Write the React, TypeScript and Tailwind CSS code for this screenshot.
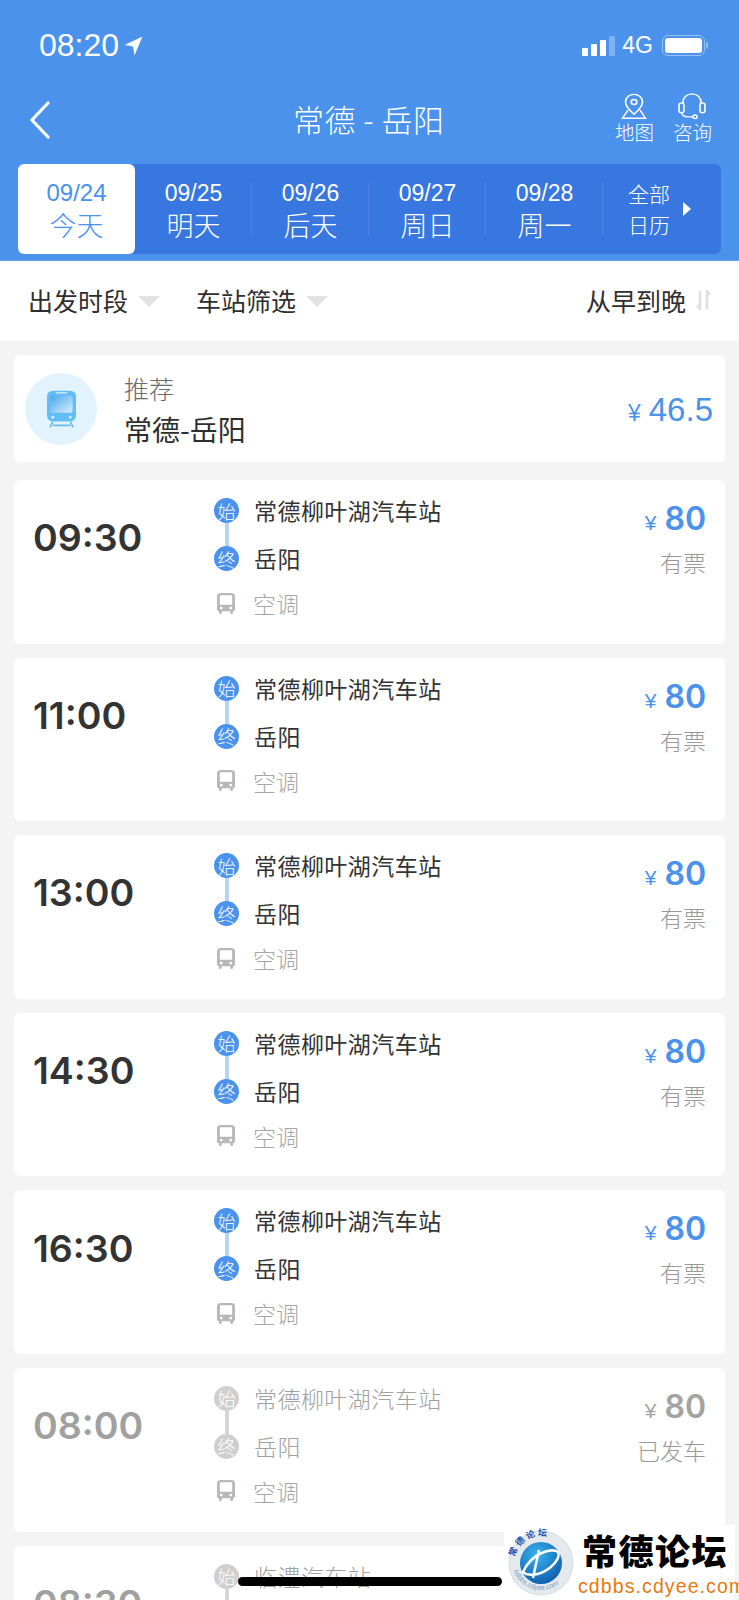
import React from "react";

const cjk = { fontFamily: '"Noto Sans CJK SC", sans-serif' };
const latin = { fontFamily: '"Liberation Sans", sans-serif' };

const tabs = [
  ["09/24", "今天"],
  ["09/25", "明天"],
  ["09/26", "后天"],
  ["09/27", "周日"],
  ["09/28", "周一"],
];

const trips = [
  { time: "09:30", from: "常德柳叶湖汽车站", status: "有票", off: false },
  { time: "11:00", from: "常德柳叶湖汽车站", status: "有票", off: false },
  { time: "13:00", from: "常德柳叶湖汽车站", status: "有票", off: false },
  { time: "14:30", from: "常德柳叶湖汽车站", status: "有票", off: false },
  { time: "16:30", from: "常德柳叶湖汽车站", status: "有票", off: false },
  { time: "08:00", from: "常德柳叶湖汽车站", status: "已发车", off: true },
  { time: "08:30", from: "临澧汽车站", status: "已发车", off: true },
];

function BusIcon() {
  return (
    <svg width="18" height="21" viewBox="0 0 19 23" preserveAspectRatio="none" className="block">
      <path fillRule="evenodd" fill="#b8b8b8" d="M4 0h11a4 4 0 0 1 4 4v14a2 2 0 0 1-2 2v1.500a1.500 1.500 0 0 1-3 0V20H5v1.500a1.500 1.500 0 0 1-3 0V20a2 2 0 0 1-2-2V4a4 4 0 0 1 4-4Zm-1 3.500V13h13V3.500a1 1 0 0 0-1-1H4a1 1 0 0 0-1 1ZM4.500 15a1.500 1.500 0 1 0 0 3 1.500 1.500 0 0 0 0-3Zm10 0a1.500 1.500 0 1 0 0 3 1.500 1.500 0 0 0 0-3Z" />
    </svg>
  );
}

function TrainIcon() {
  return (
    <svg width="29" height="38" viewBox="0 0 30 38" className="block">
      <defs>
        <linearGradient id="tg" x1="0" y1="0" x2="1" y2="1">
          <stop offset="0" stopColor="#4aa8f0" />
          <stop offset="1" stopColor="#d8eefc" />
        </linearGradient>
      </defs>
      <rect x="0" y="0" width="30" height="32" rx="6" fill="#63bdf5" />
      <rect x="3.500" y="5" width="23" height="18" rx="3" fill="url(#tg)" />
      <rect x="9" y="1.500" width="12" height="1.500" rx="0.700" fill="#c6e8fc" />
      <circle cx="6" cy="27.500" r="1.500" fill="#d8eefc" />
      <circle cx="24" cy="27.500" r="1.500" fill="#d8eefc" />
      <path d="M6 32 3 38M24 32l3 6M6 36h18" stroke="#63bdf5" strokeWidth="1.800" fill="none" />
    </svg>
  );
}

function Badge({ label, off }: { label: string; off: boolean }) {
  return (
    <span
      style={cjk}
      className={`flex h-[25px] w-[25px] items-center justify-center rounded-full text-[18px] font-light leading-none text-white ${off ? "bg-[#cfcfcf]" : "bg-[#4a92ec]"}`}
    >
      {label}
    </span>
  );
}

function TripCard({ time, from, status, off }: { time: string; from: string; status: string; off: boolean }) {
  const text = off ? "text-[#a0a0a0]" : "text-[#333333]";
  const accent = off ? "text-[#a3a3a3]" : "text-[#4a92ec]";
  return (
    <div className="mb-[14px] flex h-[163.600px] rounded-[6px] bg-white">
      <div
        style={{ fontFamily: "Inter, sans-serif" }}
        className={`flex w-[199px] items-center pb-[47px] pl-[19px] text-[37.500px] font-semibold ${off ? "text-[#a0a0a0]" : "text-[#333333]"}`}
      >
        {time}
      </div>
      <div className="flex flex-1 flex-col pt-[18px]" style={cjk}>
        <div className="flex">
          <div className="flex w-[41px] flex-col items-start pl-[1px]">
            <Badge label="始" off={off} />
            <span className={`ml-[10.500px] h-[23px] w-[4px] ${off ? "bg-[#d6d6d6]" : "bg-[#b9d3f5]"}`} />
            <Badge label="终" off={off} />
          </div>
          <div className={`flex flex-col gap-[18px] text-[23px] leading-[30px] tracking-[0.450px] ${off ? "font-light" : "font-normal"} ${text}`}>
            <span className="-mt-[3px]">{from}</span>
            <span>岳阳</span>
          </div>
        </div>
        <div className="mt-[15px] flex items-center gap-[18px] pl-[4px] text-[23px] font-light leading-[30px] text-[#a6a6a6]">
          <BusIcon />
          <span>空调</span>
        </div>
      </div>
      <div className="flex flex-col items-end pr-[19px] pt-[19px]">
        <div className={`flex items-baseline gap-[8px] leading-[40px] ${accent}`}>
          <span style={latin} className="text-[21px]">¥</span>
          <span style={{ fontFamily: "Inter, sans-serif" }} className="text-[32px] font-semibold">80</span>
        </div>
        <span style={cjk} className="mt-[4px] text-[23px] font-light leading-[30px] text-[#999999]">{status}</span>
      </div>
    </div>
  );
}

function Triangle() {
  return <span className="h-0 w-0 border-x-[11px] border-t-[11px] border-x-transparent border-t-[#e2e2e2]" />;
}

function Watermark() {
  return (
    <div className="absolute left-[504px] top-[1525px] flex h-[75px] w-[231px] bg-white">
      <svg width="70" height="70" viewBox="0 0 70 70" className="mt-[3px] ml-[2px] shrink-0">
        <defs>
          <radialGradient id="lg" cx="0.400" cy="0.300" r="0.800">
            <stop offset="0" stopColor="#39b4ee" />
            <stop offset="1" stopColor="#0a55a8" />
          </radialGradient>
          <path id="top" d="M8 35a27 27 0 0 1 54 0" />
          <path id="bot" d="M6 33a29 29 0 0 0 58 0" />
        </defs>
        <circle cx="35" cy="35" r="32" fill="#e4e9ee" stroke="#d5dbe2" />
        <circle cx="35" cy="35" r="21" fill="url(#lg)" />
        <path d="M17 44 C26 24 46 20 52 24 C56 32 38 50 20 46Z M33 22 L27 50" fill="none" stroke="#ffffff" strokeWidth="2.500" />
        <text fontSize="9" fontWeight="700" fill="#1c4fb0" style={cjk}>
          <textPath href="#top" startOffset="6">常 德 论 坛</textPath>
        </text>
        <text fontSize="7" fill="#7d9cc0" style={latin}>
          <textPath href="#bot" startOffset="10">cdbbs.cdyee.com</textPath>
        </text>
      </svg>
      <div className="ml-[2px] flex flex-col">
        <span style={cjk} className="ml-[4px] mt-[1px] text-[35px] font-black leading-[48px] tracking-[1.500px] text-black">常德论坛</span>
        <span style={latin} className="mt-[1px] text-[19.500px] leading-[22px] tracking-[1.100px] text-[#e8780f]">cdbbs.cdyee.com</span>
      </div>
    </div>
  );
}

export default function App() {
  return (
    <div className="relative h-[1600px] w-[739px] overflow-hidden bg-[#f4f4f4]">
      <header className="h-[261px] border-b border-[#6aa8f2] bg-[#4a92ec] text-white">
        <div className="flex h-[88px] items-center justify-between pl-[39px] pr-[31px] pt-[2px]">
          <div className="flex items-center gap-[5px]">
            <span style={latin} className="text-[32px] font-medium">08:20</span>
            <svg width="19" height="20" viewBox="0 0 19 20" className="mt-[1px]">
              <path d="M18.500 0.500 0.500 9l8.500 1.500L10.500 19.500Z" fill="#ffffff" />
            </svg>
          </div>
          <div className="flex items-center">
            <div className="mt-[2px] flex items-end gap-[3px]">
              <span className="h-[8px] w-[6px] rounded-[1px] bg-white" />
              <span className="h-[12px] w-[6px] rounded-[1px] bg-white" />
              <span className="h-[16px] w-[6px] rounded-[1px] bg-white" />
              <span className="h-[20px] w-[6px] rounded-[1px] bg-[#7fb2f1]" />
            </div>
            <span style={latin} className="ml-[7px] text-[23px]">4G</span>
            <div className="ml-[9px] flex items-center">
              <div className="flex h-[21px] w-[43px] rounded-[6px] border border-[#97c1f4] p-[2px]">
                <div className="flex-1 rounded-[3px] bg-white" />
              </div>
              <span className="ml-[1px] h-[7px] w-[2px] rounded-r-[2px] bg-[#97c1f4]" />
            </div>
          </div>
        </div>

        <div className="flex h-[76px] items-start pr-[27px]">
          <svg width="26" height="38" viewBox="0 0 26 38" className="ml-[28px] mt-[13px] shrink-0">
            <path d="M20 2 4 19l16 17" fill="none" stroke="#ffffff" strokeWidth="3.200" strokeLinecap="round" />
          </svg>
          <div style={cjk} className="ml-[239px] mt-[12px] flex-1 whitespace-nowrap text-[31px] font-light leading-[38px] tracking-[0.500px]">常德 - 岳阳</div>
          <div style={cjk} className="flex gap-[19px] text-[19.500px] font-light leading-[24px]">
            <div className="flex flex-col items-center">
              <svg width="26" height="27" viewBox="0 0 26 30" preserveAspectRatio="none" className="mt-[5px]">
                <path d="M13 1.500a8.500 8.500 0 0 0-8.500 8.500c0 5.500 8.500 13.500 8.500 13.500S21.500 15.500 21.500 10A8.500 8.500 0 0 0 13 1.500Z" fill="none" stroke="#fff" strokeWidth="1.600" />
                <circle cx="13" cy="10" r="2.800" fill="none" stroke="#fff" strokeWidth="1.600" />
                <path d="M7 19 1.500 28h23L19 19" fill="none" stroke="#fff" strokeWidth="1.600" />
              </svg>
              <span>地图</span>
            </div>
            <div className="flex flex-col items-center">
              <svg width="30" height="27" viewBox="0 0 30 30" preserveAspectRatio="none" className="mt-[5px]">
                <path d="M6 12V10a9 9 0 0 1 18 0v2" fill="none" stroke="#fff" strokeWidth="1.600" />
                <rect x="2" y="11" width="5" height="11" rx="2.500" fill="none" stroke="#fff" strokeWidth="1.600" />
                <rect x="23" y="11" width="5" height="11" rx="2.500" fill="none" stroke="#fff" strokeWidth="1.600" />
                <path d="M5 22c0 3 2 4.500 6 4.500h5" fill="none" stroke="#fff" strokeWidth="1.600" />
                <circle cx="18" cy="26.500" r="2" fill="none" stroke="#fff" strokeWidth="1.600" />
              </svg>
              <span>咨询</span>
            </div>
          </div>
        </div>

        <div className="mx-[18px] flex h-[90px] rounded-[6px] bg-[#3876e0]">
          {tabs.map(([d, w], i) => (
            <div
              key={d}
              className={`relative flex w-[117px] flex-col items-center justify-center ${i === 0 ? "rounded-[6px] bg-white text-[#4a92ec]" : "text-white"}`}
            >
              <span style={latin} className={`mt-[3px] leading-[26px] ${i === 0 ? "text-[24px] font-medium" : "text-[23px]"}`}>{d}</span>
              <span style={cjk} className="mt-[2px] text-[27px] font-light leading-[34px]">{w}</span>
              {i > 0 && <span className="absolute right-0 top-[18px] h-[54px] w-px bg-[#4a84e6]" />}
            </div>
          ))}
          <div className="flex flex-1 items-center justify-center gap-[13px] pr-[5px]">
            <div style={cjk} className="flex flex-col text-[21px] font-light leading-[31px] text-white">
              <span>全部</span>
              <span>日历</span>
            </div>
            <span className="h-0 w-0 border-y-[7px] border-l-[8px] border-y-transparent border-l-white" />
          </div>
        </div>
      </header>

      <div style={cjk} className="flex h-[80px] items-center bg-white pb-[2px] pl-[28px] pr-[28px] text-[25px] font-normal leading-none text-[#2e2e2e]">
        <span>出发时段</span>
        <span className="ml-[10px] mr-[36px] mt-[2px] flex"><Triangle /></span>
        <span>车站筛选</span>
        <span className="ml-[10px] mt-[2px] flex"><Triangle /></span>
        <span className="ml-auto">从早到晚</span>
        <svg width="15" height="20" viewBox="0 0 15 20" className="ml-[10px]">
          <path d="M4 1v18L1 15M11 19V1l3 4" fill="none" stroke="#e0e0e0" strokeWidth="2.500" />
        </svg>
      </div>

      <main className="px-[14px] pt-[14px]">
        <div className="mb-[18px] flex h-[107px] items-center rounded-[6px] bg-white pl-[11px] pr-[12px]">
          <div className="flex h-[72px] w-[72px] items-center justify-center rounded-full bg-[#e3f3fe]">
            <TrainIcon />
          </div>
          <div style={cjk} className="ml-[27px] flex flex-col font-light">
            <span className="text-[25px] leading-[36px] text-[#6a6a6a]">推荐</span>
            <span className="mt-[4px] text-[28px] font-normal leading-[38px] text-[#2e2e2e]">常德-岳阳</span>
          </div>
          <div className="ml-auto flex items-baseline gap-[8px] pt-[3px] text-[#4a92ec]">
            <span style={latin} className="text-[23px]">¥</span>
            <span style={latin} className="text-[33px]">46.5</span>
          </div>
        </div>
        {trips.map((t) => (
          <TripCard key={t.time} {...t} />
        ))}
      </main>

      <div className="absolute left-[238px] top-[1577px] h-[9px] w-[264px] rounded-full bg-black" />
      <Watermark />
    </div>
  );
}
